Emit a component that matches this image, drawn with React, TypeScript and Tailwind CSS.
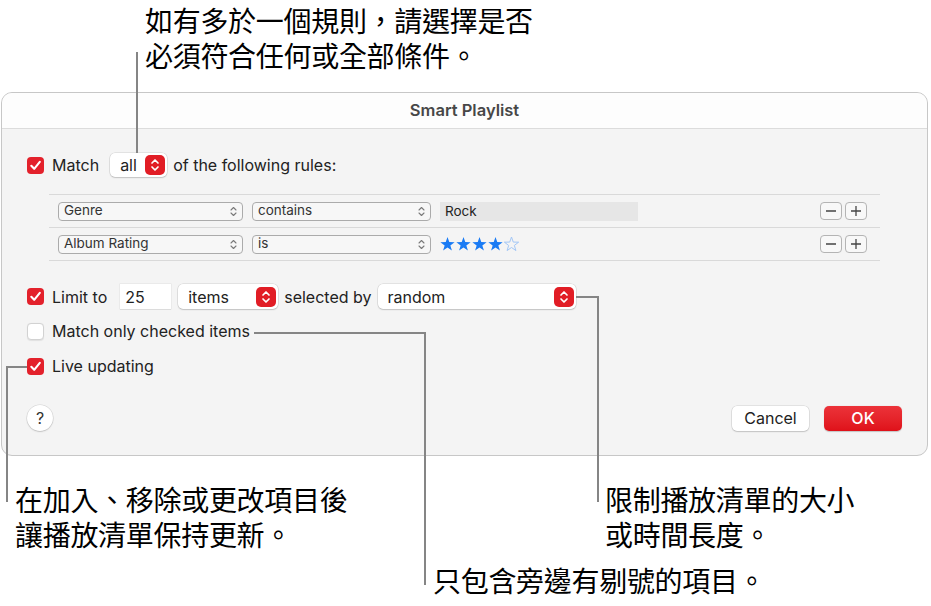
import React from "react";

const ui = "font-['Inter','Liberation_Sans',sans-serif]";
const cjk = "font-['Noto_Sans_CJK_TC','Noto_Sans_CJK_SC',sans-serif]";
const raised = "bg-white shadow-[0_0_0_0.5px_rgba(0,0,0,0.14),0_1px_1.5px_rgba(0,0,0,0.14)]";

function Check({ checked }: { checked: boolean }) {
  if (!checked) {
    return <div className="w-[17px] h-[17px] shrink-0 rounded-[4px] bg-white border border-[#d2d2d2] shadow-[0_0.5px_1px_rgba(0,0,0,0.08)]" />;
  }
  return (
    <div className="w-[17px] h-[17px] shrink-0 rounded-[4px] bg-[#e3212b] flex items-center justify-center">
      <svg width="13" height="13" viewBox="0 0 13 13" fill="none">
        <path d="M2.3 6.8l2.9 3L10.8 2.9" stroke="white" strokeWidth="2.1" strokeLinecap="round" strokeLinejoin="round" />
      </svg>
    </div>
  );
}

function Stepper() {
  return (
    <div className="w-[20px] h-[20px] shrink-0 rounded-[5px] bg-[#e11d25] flex items-center justify-center">
      <svg width="10" height="14" viewBox="0 0 10 14" fill="none">
        <path d="M2 5l3-3 3 3M2 9l3 3 3-3" stroke="white" strokeWidth="1.7" strokeLinecap="round" strokeLinejoin="round" />
      </svg>
    </div>
  );
}

function RedPopup({ label, width }: { label: string; width: string }) {
  return (
    <div className={`${width} h-[25px] shrink-0 rounded-[5px] ${raised} flex items-center pl-[10px] pr-[2px]`}>
      <span className="flex-1 text-[16px] text-[#222]">{label}</span>
      <Stepper />
    </div>
  );
}

function GrayPopup({ label, width }: { label: string; width: string }) {
  return (
    <div className={`${width} h-[19px] shrink-0 rounded-[4px] border border-[#ababab] bg-[#f7f7f7] flex items-center pl-[5px] pr-[5px]`}>
      <span className="flex-1 text-[13.5px] leading-none text-[#333]">{label}</span>
      <svg width="7" height="11" viewBox="0 0 7 11" fill="none">
        <path d="M1 4l2.5-2.5L6 4M1 7l2.5 2.5L6 7" stroke="#7a7a7a" strokeWidth="1.1" strokeLinecap="round" strokeLinejoin="round" />
      </svg>
    </div>
  );
}

function MiniButton({ plus }: { plus?: boolean }) {
  return (
    <div className="w-[22px] h-[18px] rounded-[4px] border border-[#b4b4b4] bg-[#f8f8f8] flex items-center justify-center">
      <svg width="12" height="12" viewBox="0 0 12 12">
        <path d={plus ? "M1 6h10M6 1v10" : "M1 6h10"} stroke="#444" strokeWidth="1.3" />
      </svg>
    </div>
  );
}

function Stars({ rating }: { rating: number }) {
  const pts = "7,0 8.65,4.73 13.66,4.84 9.66,7.87 11.11,12.66 7,9.8 2.89,12.66 4.34,7.87 0.34,4.84 5.35,4.73";
  return (
    <div className="flex gap-[1px]">
      {[0, 1, 2, 3, 4].map((i) => (
        <svg key={i} width="15" height="15" viewBox="0 0 14 14">
          {i < rating ? (
            <polygon points={pts} fill="#1a7bf4" />
          ) : (
            <polygon points={pts} fill="none" stroke="#9fc5f6" strokeWidth="0.9" strokeLinejoin="round" />
          )}
        </svg>
      ))}
    </div>
  );
}

function RuleRow({ field, op, top, children }: { field: string; op: string; top?: boolean; children: React.ReactNode }) {
  return (
    <div className={`flex items-center pl-[9px] pr-[13px] ${top ? "h-[33px] border-t border-[#d9d9d9]" : "h-[32px]"}`}>
      <GrayPopup label={field} width="w-[185px]" />
      <div className="w-[9px]" />
      <GrayPopup label={op} width="w-[179px]" />
      <div className="w-[9px]" />
      {children}
      <div className="ml-auto flex gap-[3px]">
        <MiniButton />
        <MiniButton plus />
      </div>
    </div>
  );
}

export default function App() {
  return (
    <div className="relative w-[931px] h-[606px] bg-white overflow-hidden text-black">
      {/* top caption */}
      <div className={`${cjk} h-[92px] pl-[145px] pt-[3px] text-[28px] leading-[35px] tracking-[-0.3px]`}>
        <div>如有多於一個規則，請選擇是否</div>
        <div>必須符合任何或全部條件。</div>
      </div>

      {/* dialog */}
      <div className={`${ui} ml-[1px] w-[927px] h-[364px] rounded-[11px] border border-[#c7c7c7] bg-[#f4f4f4] overflow-hidden flex flex-col`}>
        <div className="h-[36px] shrink-0 bg-[#fdfdfd] border-b border-[#dcdcdc] flex items-center justify-center text-[16.5px] font-semibold text-[#474747]">
          Smart Playlist
        </div>
        <div className="flex-1 flex flex-col pl-[25px] pr-[25px] pt-[24px] text-[16px] text-[#222]">
          <div className="h-[24px] flex items-center">
            <Check checked />
            <span className="ml-[8px]">Match</span>
            <div className={`ml-[11px] w-[57px] h-[24px] rounded-[5px] ${raised} flex items-center pl-[10px] pr-[2px]`}>
              <span className="flex-1">all</span>
              <Stepper />
            </div>
            <span className="ml-[6px]">of the following rules:</span>
          </div>

          <div className="mt-[17px] ml-[22px] w-[831px] border-y border-[#d9d9d9]">
            <RuleRow field="Genre" op="contains">
              <div className="w-[198px] h-[19px] bg-[#e6e6e6] flex items-center pl-[5px] text-[13.5px] text-[#222]">Rock</div>
            </RuleRow>
            <RuleRow field="Album Rating" op="is" top>
              <Stars rating={4} />
            </RuleRow>
          </div>

          <div className="mt-[23px] h-[25px] flex items-center">
            <Check checked />
            <span className="ml-[8px]">Limit to</span>
            <div className="ml-[13px] w-[51px] h-[25px] bg-white shadow-[0_0_0_0.5px_rgba(0,0,0,0.08),0_1px_0_rgba(0,0,0,0.06)] flex items-center pl-[5px]">25</div>
            <div className="ml-[7px]">
              <RedPopup label="items" width="w-[100px]" />
            </div>
            <span className="ml-[6px]">selected by</span>
            <div className="ml-[6px]">
              <RedPopup label="random" width="w-[198px]" />
            </div>
          </div>

          <div className="mt-[10px] h-[24px] flex items-center">
            <Check checked={false} />
            <span className="ml-[8px]">Match only checked items</span>
          </div>

          <div className="mt-[11px] h-[24px] flex items-center">
            <Check checked />
            <span className="ml-[8px]">Live updating</span>
          </div>

          <div className="mt-[27px] h-[26px] flex items-center">
            <div className={`w-[26px] h-[26px] rounded-full ${raised} flex items-center justify-center text-[16px] text-[#333]`}>?</div>
            <div className={`ml-auto w-[77px] h-[25px] rounded-[5px] ${raised} flex items-center justify-center text-[16px] text-[#222]`}>Cancel</div>
            <div className="ml-[15px] w-[78px] h-[25px] rounded-[5px] bg-gradient-to-b from-[#ec3239] to-[#df1019] shadow-[0_0.5px_1px_rgba(0,0,0,0.2)] flex items-center justify-center text-[16px] font-medium text-white">OK</div>
          </div>
        </div>
      </div>

      {/* bottom captions */}
      <div className={`${cjk} text-[28px] leading-[35px] tracking-[-0.3px]`}>
        <div className="flex pt-[26px]">
          <div className="w-[605px] pl-[15px]">
            <div>在加入、移除或更改項目後</div>
            <div>讓播放清單保持更新。</div>
          </div>
          <div>
            <div>限制播放清單的大小</div>
            <div>或時間長度。</div>
          </div>
        </div>
        <div className="mt-[11px] pl-[433px]">只包含旁邊有剔號的項目。</div>
      </div>

      {/* leader lines */}
      <div className="absolute left-[136px] top-[52px] w-[2px] h-[101px] bg-[#858585]" />
      <div className="absolute left-[576px] top-[296px] w-[23px] h-[2px] bg-[#858585]" />
      <div className="absolute left-[597px] top-[296px] w-[2px] h-[206px] bg-[#858585]" />
      <div className="absolute left-[254px] top-[332px] w-[172px] h-[2px] bg-[#858585]" />
      <div className="absolute left-[424px] top-[332px] w-[2px] h-[253px] bg-[#858585]" />
      <div className="absolute left-[6px] top-[366px] w-[21px] h-[2px] bg-[#858585]" />
      <div className="absolute left-[6px] top-[366px] w-[2px] h-[136px] bg-[#858585]" />
    </div>
  );
}
